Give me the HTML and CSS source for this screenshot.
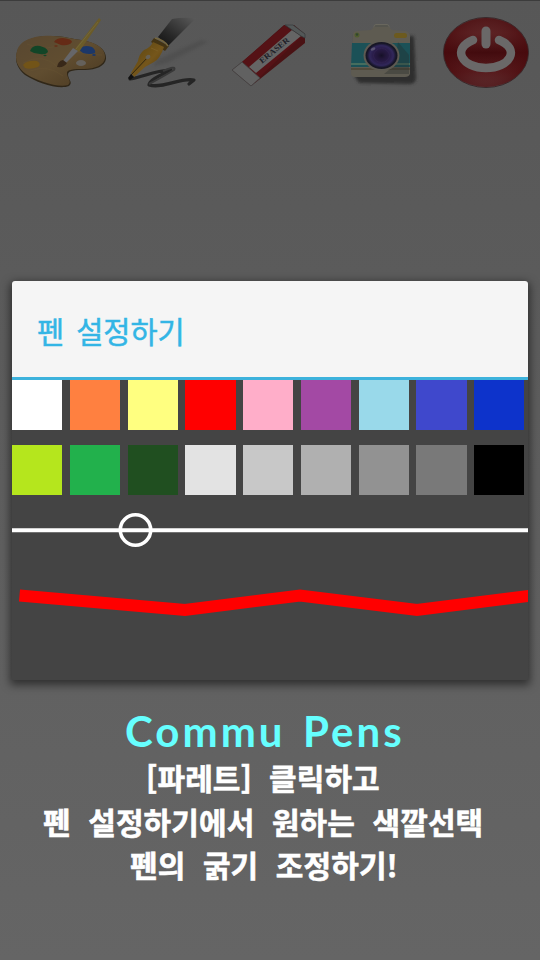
FILE: index.html
```html
<!DOCTYPE html>
<html lang="ko">
<head>
<meta charset="utf-8">
<title>Commu Pens</title>
<link rel="stylesheet" href="styles.css">
</head>
<body>
<main class="screen">
  <header class="toolbar">
    <svg viewBox="0 0 540 100" width="540" height="100">
      <defs>
        <linearGradient id="wood" x1="0" y1="0" x2="1" y2="1"><stop offset="0" stop-color="#584730"/><stop offset=".5" stop-color="#604d30"/><stop offset="1" stop-color="#493820"/></linearGradient>
        <linearGradient id="barrel" x1="0" y1="1" x2="1" y2="0"><stop offset="0" stop-color="#111"/><stop offset=".35" stop-color="#272727"/><stop offset="1" stop-color="#5b5b5b"/></linearGradient>
        <linearGradient id="nib" x1="0" y1="0" x2="1" y2="1"><stop offset="0" stop-color="#57420f"/><stop offset=".55" stop-color="#75561b"/><stop offset="1" stop-color="#49320a"/></linearGradient>
        <radialGradient id="lens"><stop offset="0" stop-color="#151027"/><stop offset=".25" stop-color="#211638"/><stop offset=".55" stop-color="#281b47"/><stop offset=".8" stop-color="#31275a"/><stop offset="1" stop-color="#151527"/></radialGradient>
        <linearGradient id="power" x1="0" y1="0" x2="0" y2="1"><stop offset="0" stop-color="#5e3030"/><stop offset=".22" stop-color="#5e2728"/><stop offset=".5" stop-color="#420b0e"/><stop offset=".78" stop-color="#591f21"/><stop offset="1" stop-color="#67494a"/></linearGradient>
        <radialGradient id="redside"><stop offset="0" stop-color="#520d10" stop-opacity="0"/><stop offset=".55" stop-color="#520d10" stop-opacity=".25"/><stop offset="1" stop-color="#4b090c"/></radialGradient>
        <filter id="soft" x="-30%" y="-30%" width="160%" height="160%"><feGaussianBlur stdDeviation="1.5"/></filter>
      </defs>

      <g class="palette">
        <path d="M17 52C20 40 37 35 53 36C64 36 72 39 81 40C95 42 107 49 106 59C105 66 96 70 85 70C75 70 68 70 68 75C69 81 73 82 69 86C59 90 37 83 25 75C18 69 14 61 17 52Z" fill="#302718"/>
        <path d="M17 51C20 39 37 35 53 36C64 36 72 39 81 40C95 42 106 48 105 58C104 65 95 69 84 69C74 69 66 69 67 74C68 80 72 81 68 85C58 88 37 81 26 74C18 68 14 60 17 51Z" fill="url(#wood)"/>
        <path d="M23 63Q43 52 59 68M30 71Q48 64 63 76M27 44Q48 53 60 43M72 51Q91 55 102 55" fill="none" stroke="#6a5535" stroke-width=".7" opacity=".5"/>
        <ellipse cx="81" cy="63" rx="5" ry="3" fill="#65615b"/>
        <path d="M30 51Q32 45 40 46Q48 48 48 52Q46 55 40 54L34 53Z" fill="#124527"/>
        <path d="M54 42Q56 38 63 38Q72 39 72 42Q69 46 61 45Z" fill="#652b16"/>
        <path d="M78 49Q84 44 92 47Q96 50 95 53Q90 55 83 53Z" fill="#1c3768"/>
        <path d="M23 65Q27 60 37 61Q42 64 38 67Q30 70 25 68Z" fill="#725418"/>
        <ellipse cx="45" cy="55.5" rx="1.6" ry=".8" fill="#124527"/>
        <ellipse cx="56" cy="46" rx="1.8" ry=".7" fill="#652b16"/>
        <ellipse cx="94" cy="55" rx="1.8" ry="1" fill="#1c3768"/>
        <path d="M75 49L99 18L101 20L79 52Z" fill="#6b5b28"/>
        <path d="M76 49L98 22" stroke="#756a3c" stroke-width=".8"/>
        <path d="M63 61L73 48L78 51L66 63Z" fill="#666669"/>
        <path d="M57 67Q58 61 63 60L67 63Q64 68 57 67Z" fill="#382819"/>
      </g>

      <g class="pen">
        <path d="M157 60L201 40L208 42L167 63L153 66Z" fill="#3d3d3d" opacity=".3" filter="url(#soft)"/>
        <path d="M130 79C146 76 153 71 171 70C161 75 149 80 149 85C163 89 181 77 194 80L189 84" fill="none" stroke="#252525" stroke-width="3.2" stroke-linecap="round" stroke-linejoin="round"/>
        <path d="M163 71Q177 65 174 70Q159 79 149 84" fill="none" stroke="#393939" stroke-width="2"/>
        <path d="M158 37L172 19Q181 17 196 18L168 46Z" fill="url(#barrel)"/>
        <path d="M154 38L169 46L165 51L151 42Z" fill="#443414"/>
        <path d="M155 38Q164 40 168 46" fill="none" stroke="#75663f" stroke-width="1.5"/>
        <path d="M153 42L164 47Q160 59 154 62L145 67L134 77L131 73L138 61Q139 54 144 50Q150 48 153 42Z" fill="url(#nib)"/>
        <path d="M131 75L148 57" stroke="#302611" stroke-width="1"/>
        <ellipse cx="148" cy="57" rx="2.6" ry="2" fill="#656055" transform="rotate(-30 148 57)"/>
        <path d="M151 48L158 51" stroke="#7b5e24"/>
        <path d="M128 78L131 74L134 77L130 80Z" fill="#111"/>
      </g>

      <g class="eraser">
        <path d="M242 62L284 25L294 25L305 34V43L260 79L251 86L232 70Z" fill="#4a1214"/>
        <path d="M242 62L285 25L299 39L259 78Z" fill="#551216"/>
        <path d="M249 67L292 30L301 36L256 73Z" fill="#656565"/>
        <path d="M242 62L260 78L251 86L232 70Z" fill="#616161" stroke="#414141" stroke-width=".8"/>
        <path d="M285 25L293 25L305 34V38L301 36L288 27Z" fill="#535858" stroke="#343b3c" stroke-width=".7"/>
        <text class="eraser-label" x="274" y="53" transform="rotate(-39 274 50)" text-anchor="middle" textLength="36" lengthAdjust="spacingAndGlyphs">ERASER</text>
      </g>

      <g class="camera">
        <path d="M355 34L414 36L416 78Q416 84 409 84L359 83L355 77Z" fill="#2d2d2d" filter="url(#soft)"/>
        <rect x="374" y="24.500" width="15" height="7" rx="2" fill="#55554e" stroke="#69675e"/>
        <path d="M353 34Q353 31 357 31L371 30L374 27H389L392 30L406 31Q410 32 410 36V74Q409 77 405 77H355Q351 77 351 73Z" fill="#5e5b51"/>
        <path d="M352 43H410V67H351Z" fill="#1b5157"/>
        <path d="M351 63H410V65H351Z" fill="#456d5e"/>
        <path d="M351 68H410V70H351Z" fill="#514a3b"/>
        <circle cx="357" cy="35" r="2.500" fill="#505e2e"/><circle cx="357" cy="34.500" r="1.200" fill="#31452f"/>
        <rect x="394" y="33" width="13" height="5" rx="2.500" fill="#6c5a1e"/>
        <path d="M398 42L409 55V74H384L395 65Z" fill="#242a2a" opacity=".35"/>
        <ellipse cx="381.500" cy="55.500" rx="18" ry="15.500" fill="#5d5a52"/>
        <ellipse cx="381.500" cy="55.500" rx="16" ry="13.500" fill="#171625"/>
        <ellipse cx="381.500" cy="55.500" rx="14.700" ry="12.300" fill="url(#lens)"/>
        <ellipse cx="381.500" cy="55.500" rx="8" ry="7" fill="none" stroke="#30224f" stroke-width="1"/>
        <ellipse cx="373" cy="49" rx="2.500" ry="1.500" fill="#5a5472" transform="rotate(-25 373 49)"/>
      </g>

      <g class="power">
        <ellipse cx="486" cy="52.500" rx="42.500" ry="35" fill="url(#power)" stroke="#38292b" stroke-width="1"/>
        <ellipse cx="486" cy="52.500" rx="42" ry="34.500" fill="url(#redside)" opacity=".65"/>
        <path d="M473 40C451 49 462 68 486 68C510 68 521 49 499 40" fill="none" stroke="#6a6868" stroke-width="8.500" stroke-linecap="round"/>
        <path d="M486 31V44" stroke="#6a6868" stroke-width="9" stroke-linecap="round"/>
      </g>
    </svg>
  </header>

  <section class="dialog">
    <h1 class="dialog-title"><span>펜</span><span>설정하기</span></h1>
    <div class="swatches">
      <i class="white"></i><i class="orange"></i><i class="yellow"></i><i class="red"></i><i class="pink"></i><i class="purple"></i><i class="sky"></i><i class="indigo"></i><i class="blue"></i>
      <i class="lime"></i><i class="green"></i><i class="forest"></i><i class="gray1"></i><i class="gray2"></i><i class="gray3"></i><i class="gray4"></i><i class="gray5"></i><i class="black"></i>
    </div>
    <svg class="stroke-preview" viewBox="0 0 516 185" width="516" height="185">
      <path d="M0 35.200H516" stroke="#fff" stroke-width="4"/>
      <circle cx="123.500" cy="35" r="15.200" fill="none" stroke="#fff" stroke-width="3.600"/>
      <path d="M7.500 100.500L173 115L288 100.500L405 115L520 100.500" fill="none" stroke="#f00" stroke-width="12"/>
    </svg>
  </section>

  <section class="caption">
    <h2 class="brand"><span class="commu">Commu</span><span class="pens">Pens</span></h2>
    <p class="line line-one"><span>[파레트]</span><span>클릭하고</span></p>
    <p class="line line-two"><span>펜</span><span>설정하기에서</span><span>원하는</span><span>색깔선택</span></p>
    <p class="line line-three"><span>펜의</span><span>굵기</span><span>조정하기!</span></p>
  </section>
</main>
</body>
</html>
```

FILE: styles.css
```css
* { box-sizing: border-box; }
body { margin: 0; }
.screen {
  width: 540px;
  height: 960px;
  overflow: hidden;
  background: linear-gradient(#575757, #656565);
  border-top: 1px solid #3c3c3c;
  font-family: "Noto Sans CJK KR", sans-serif;
}
.toolbar { height: 279.5px; }
.toolbar svg { display: block; position: relative; top: -1px; }
.eraser-label {
  font: bold 8px "Liberation Serif", serif;
  fill: #202028;
}
.dialog {
  width: 516px;
  height: 399.5px;
  margin: 0 auto;
  overflow: hidden;
  border-radius: 3px 3px 1px 1px;
  background: #444;
  box-shadow: 0 3px 9px 2px rgba(0, 0, 0, .5);
}
.dialog-title {
  display: flex;
  align-items: center;
  gap: 12px;
  height: 99px;
  margin: 0;
  padding: 2px 25px 0;
  border-bottom: 3px solid #3db2dc;
  background: #f5f5f5;
  color: #33b5e5;
  font-size: 29.500px;
  font-weight: 400;
  line-height: 40px;
  -webkit-text-stroke: .5px #33b5e5;
}
.swatches {
  display: grid;
  grid-template-columns: repeat(9, 50.25px);
  grid-template-rows: 50.5px 50px;
  gap: 15px 7.5px;
}
.white { background: #fff; }
.orange { background: #ff8040; }
.yellow { background: #ffff80; }
.red { background: #f00; }
.pink { background: #ffaec9; }
.purple { background: #a349a4; }
.sky { background: #99d9ea; }
.indigo { background: #3f48cc; }
.blue { background: #0d33cb; }
.lime { background: #b5e61d; }
.green { background: #22b14c; }
.forest { background: #204f20; }
.gray1 { background: #e3e3e3; }
.gray2 { background: #c8c8c8; }
.gray3 { background: #b0b0b0; }
.gray4 { background: #929292; }
.gray5 { background: #797979; }
.black { background: #000; }
.stroke-preview { display: block; }
.caption { padding-top: 26px; color: #fff; }
.brand {
  display: flex;
  gap: 20px;
  height: 50px;
  margin: 0;
  padding-left: 125px;
  color: #66ffff;
  font: 700 42px/50px Lato, sans-serif;
}
.commu { width: 158px; letter-spacing: 3px; }
.pens { letter-spacing: 3px; }
.line {
  display: flex;
  height: 43.5px;
  margin: 0;
  font-size: 30px;
  font-weight: 700;
  line-height: 43.5px;
  letter-spacing: .1px;
  white-space: nowrap;
  -webkit-text-stroke: .6px #fff;
}
.line-one { padding-left: 146px; gap: 17px; }
.line-two { padding-left: 43px; gap: 17.5px; }
.line-three { padding-left: 130px; gap: 17.5px; }
```
